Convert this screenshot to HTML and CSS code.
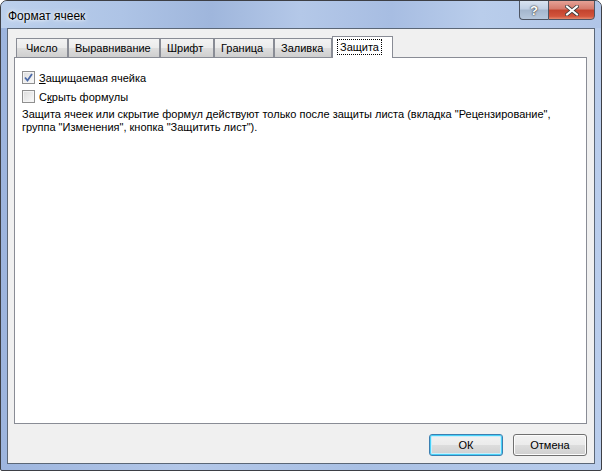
FILE: index.html
```html
<!DOCTYPE html>
<html lang="ru">
<head>
<meta charset="utf-8">
<title>Формат ячеек</title>
<link rel="stylesheet" href="styles.css">
</head>
<body>
<div class="window">
  <div class="titlebar">
    <span class="title">Формат ячеек</span>
    <div class="caption-buttons">
      <div class="cap-btn help"><span>?</span></div>
      <div class="cap-btn close">
        <svg width="14" height="11" viewBox="0 0 14 11"><path d="M2 1.5 L12 9.5 M12 1.5 L2 9.5" stroke="#3b3b3b" stroke-width="3.6" stroke-linecap="square"/><path d="M2 1.5 L12 9.5 M12 1.5 L2 9.5" stroke="#ffffff" stroke-width="2" stroke-linecap="square"/></svg>
      </div>
    </div>
  </div>
  <div class="client">
    <div class="tabs">
      <div class="tab">Число</div>
      <div class="tab">Выравнивание</div>
      <div class="tab">Шрифт</div>
      <div class="tab">Граница</div>
      <div class="tab">Заливка</div>
      <div class="tab active"><span class="focus">Защита</span></div>
    </div>
    <div class="panel">
      <label class="row">
        <span class="checkbox">
          <svg width="9" height="9" viewBox="0 0 9 9"><path d="M1 4.5 L3.5 7.5 L8 1" fill="none" stroke="#4c6aa8" stroke-width="1.8"/></svg>
        </span>
        <span><u>З</u>ащищаемая ячейка</span>
      </label>
      <label class="row">
        <span class="checkbox"></span>
        <span>С<u>к</u>рыть формулы</span>
      </label>
      <p class="note">Защита ячеек или скрытие формул действуют только после защиты листа (вкладка "Рецензирование",<br>группа "Изменения", кнопка "Защитить лист").</p>
    </div>
    <div class="buttons">
      <div class="btn default">ОК</div>
      <div class="btn">Отмена</div>
    </div>
  </div>
</div>
</body>
</html>
```
FILE: styles.css
```css
* { box-sizing: border-box; }
html, body { margin: 0; padding: 0; }
body {
  width: 602px;
  height: 471px;
  background: #ffffff;
  font-family: "Liberation Sans", Arial, sans-serif;
  font-size: 11px;
  color: #000;
  overflow: hidden;
}
.window {
  width: 602px;
  height: 471px;
  border: 1px solid #3d3f45;
  border-radius: 7px 7px 2px 2px;
  background: linear-gradient(90deg, #9db5de 0%, #b3c7e8 30%, #a9c0e4 60%, #b9cdec 100%);
  display: flex;
  flex-direction: column;
  overflow: hidden;
}
.titlebar {
  height: 28px;
  display: flex;
  align-items: flex-start;
  justify-content: space-between;
  padding-left: 7px;
  padding-right: 6px;
  background: linear-gradient(90deg, #bcd0ec 0%, #aec4e6 20%, #9fb6dc 35%, #b4c8e8 50%, #a7bde2 65%, #b9cdeb 80%, #b0c5e7 100%);
}
.title {
  font-size: 12px;
  margin-top: 8px;
  text-shadow: 0 0 6px #ffffff, 0 0 3px #ffffff;
}
.caption-buttons {
  display: flex;
  margin-top: -1px;
}
.cap-btn {
  height: 20px;
  border: 1px solid #4e5563;
  display: flex;
  align-items: center;
  justify-content: center;
}
.help {
  width: 29px;
  border-right: none;
  border-radius: 0 0 0 4px;
  background: linear-gradient(180deg, #d9e3f0 0%, #c0cfe3 45%, #a4b6cd 50%, #b6c7dc 100%);
  color: #fff;
  font-weight: bold;
  font-size: 13px;
  text-shadow: 0 0 2px #333, 0 0 1px #333;
}
.close {
  width: 47px;
  border-radius: 0 0 4px 0;
  background: linear-gradient(180deg, #e5a196 0%, #d4796a 45%, #c2432e 50%, #d2543c 85%, #e48a6f 100%);
}
.client {
  flex: 1;
  margin: 0 6px 6px 6px;
  border: 1px solid #5b6777;
  background: #f0f0f0;
  display: flex;
  flex-direction: column;
  padding: 6px 7px 7px 6px;
}
.tabs {
  display: flex;
  align-items: flex-end;
  height: 22px;
  padding-left: 2px;
  position: relative;
  z-index: 1;
}
.tab {
  height: 19px;
  padding: 0 6px;
  border: 1px solid #898c95;
  border-bottom: none;
  background: linear-gradient(180deg, #f3f3f3 0%, #ebebeb 50%, #dddddd 51%, #cfcfcf 100%);
  display: flex;
  align-items: center;
  white-space: nowrap;
}
.tab:nth-child(1) { width: 52px; padding-left: 9px; }
.tab:nth-child(2) { width: 92px; }
.tab:nth-child(3) { width: 54px; }
.tab:nth-child(4) { width: 60px; }
.tab:nth-child(5) { width: 58px; }
.tab.active {
  height: 22px;
  width: 61px;
  margin-bottom: -1px;
  background: #ffffff;
  padding: 0 3px 1px 4px;
}
.focus {
  border: 1px dotted #000;
  padding: 0 2px;
  line-height: 14px;
}
.panel {
  height: 367px;
  border: 1px solid #898c95;
  background: #ffffff;
  padding: 10px 7px 0 7px;
}
.row {
  display: flex;
  align-items: center;
  height: 19px;
  gap: 4px;
}
.checkbox {
  width: 13px;
  height: 13px;
  border: 1px solid #8f8f8f;
  background: linear-gradient(135deg, #dcdcdc 0%, #eeeeee 60%, #fbfbfb 100%);
  box-shadow: inset 0 0 0 1px #f4f4f4;
  display: flex;
  align-items: center;
  justify-content: center;
}
u { text-decoration: underline; text-underline-offset: 1px; }
.note {
  margin: 2px 0 0 0;
  line-height: 13px;
}
.buttons {
  display: flex;
  justify-content: flex-end;
  gap: 10px;
  margin-top: 10px;
}
.btn {
  width: 74px;
  height: 22px;
  border: 1px solid #707070;
  border-radius: 3px;
  background: linear-gradient(180deg, #f2f2f2 0%, #ebebeb 49%, #dddddd 50%, #cfcfcf 100%);
  box-shadow: inset 0 0 0 1px #fcfcfc;
  display: flex;
  align-items: center;
  justify-content: center;
}
.btn.default {
  border-color: #3c7fb1;
  box-shadow: inset 0 0 0 1px #48d1f8, inset 0 0 0 2px #c9eefb;
}
```
